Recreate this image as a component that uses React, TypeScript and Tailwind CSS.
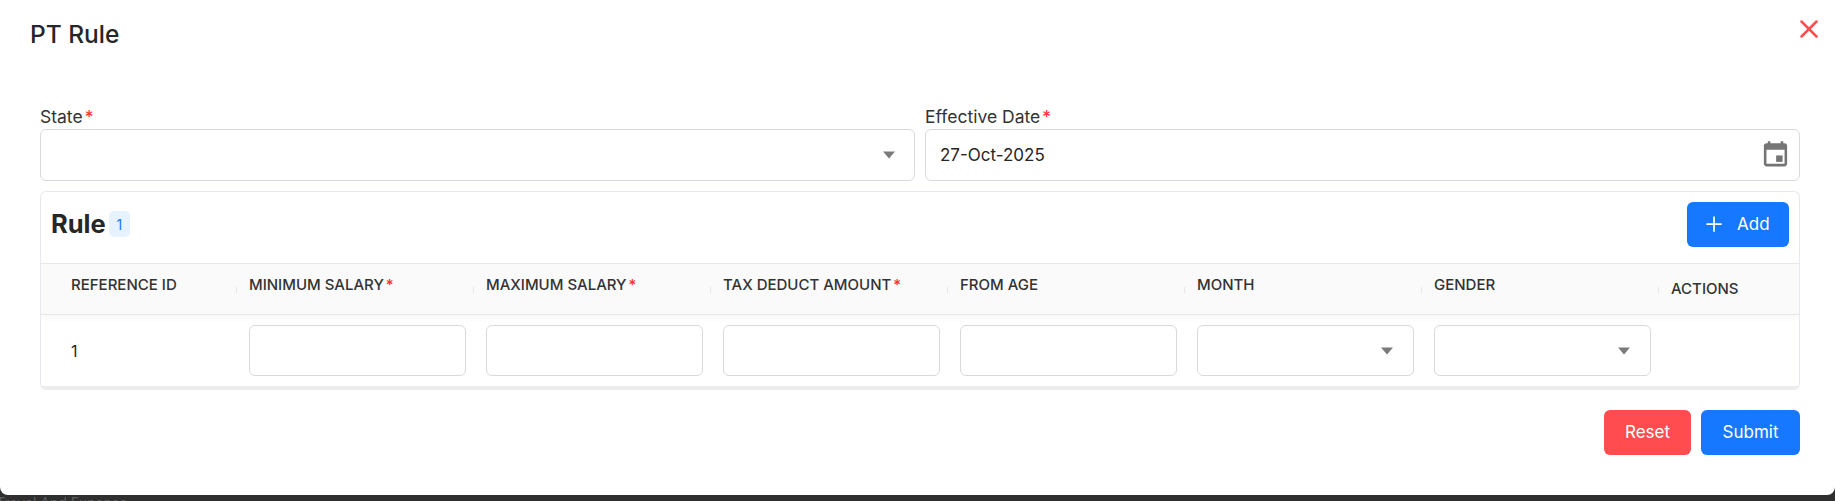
import React from 'react';
import { Plus, X } from 'lucide-react';

const columns = [
  { label: 'REFERENCE ID' },
  { label: 'MINIMUM SALARY', required: true },
  { label: 'MAXIMUM SALARY', required: true },
  { label: 'TAX DEDUCT AMOUNT', required: true },
  { label: 'FROM AGE' },
  { label: 'MONTH' },
  { label: 'GENDER' },
];

const Caret: React.FC = () => (
  <svg width="14" height="8" viewBox="0 0 14 8" className="shrink-0">
    <path d="M1 .5h12L7 7.5z" fill="#7a7a7a" />
  </svg>
);

const CalendarIcon: React.FC = () => (
  <svg width="31" height="31" viewBox="0 0 24 24" fill="#757575" className="-mt-[3px]">
    <path d="M19 4h-1V2.500h-2V4H8V2.500H6V4H5c-1.100 0-2 .9-2 2v14c0 1.100.9 2 2 2h14c1.100 0 2-.9 2-2V6c0-1.100-.9-2-2-2zm0 16H5V9h14v11z" />
    <path d="M12.500 13.500h5v5h-5z" />
  </svg>
);

const Required: React.FC = () => <span className="ml-[2px] text-[#ff2d2d]">*</span>;

const Field: React.FC<{ label: string; children: React.ReactNode }> = ({ label, children }) => (
  <div className="flex-1">
    <label className="flex h-[19px] translate-y-[1px] items-center text-[17.500px] leading-[19px] text-[#333]">
      {label}
      <Required />
    </label>
    <div className="mt-[4px] flex h-[52px] items-center justify-between rounded-[6px] border border-[#d9d9d9] bg-white pl-[14px] pr-[8px]">
      {children}
    </div>
  </div>
);

const App: React.FC = () => {
  return (
    <div className="h-[501px] w-[1835px] overflow-hidden bg-[#2f2f2f] font-['Inter',sans-serif] text-[#262626]">
      <div className="relative h-[495px] rounded-b-[8px] bg-white pl-[40px] pr-[35px]">
        <h2 className="-ml-[10px] pt-[19px] text-[24.500px] font-medium leading-[30px]">PT Rule</h2>
        <button className="absolute right-[11px] top-[14px] text-[#ff4d4f]">
          <X size={30} strokeWidth={2} />
        </button>

        <div className="mt-[57px] flex gap-[10px]">
          <Field label="State">
            <span />
            <span className="mr-[10px]">
              <Caret />
            </span>
          </Field>
          <Field label="Effective Date">
            <span className="pt-[1px] text-[17px]">27-Oct-2025</span>
            <CalendarIcon />
          </Field>
        </div>

        <div className="mt-[10px] h-[199px] overflow-hidden rounded-[6px] border border-[#e6e9ee] border-b-[4px] border-b-[#ececec] bg-white">
          <div className="flex h-[71px] items-center justify-between px-[10px] pb-[7px]">
            <div className="flex items-center gap-[3px]">
              <span className="text-[25.500px] font-bold leading-[30px]">Rule</span>
              <span className="flex h-[26px] w-[21px] items-center justify-center rounded-[5px] bg-[#e6f2ff] text-[14px] text-[#1677ff]">
                1
              </span>
            </div>
            <button className="flex h-[45px] w-[102px] items-center gap-[11px] rounded-[6px] bg-[#1677ff] pl-[15px] text-[17px] text-white">
              <Plus size={24} strokeWidth={1.75} />
              <span className="pt-[1px]">Add</span>
            </button>
          </div>

          <table className="w-full table-fixed border-collapse">
            <colgroup>
              <col className="w-[196px]" />
              <col className="w-[237px]" />
              <col className="w-[237px]" />
              <col className="w-[237px]" />
              <col className="w-[237px]" />
              <col className="w-[237px]" />
              <col className="w-[237px]" />
              <col />
            </colgroup>
            <thead>
              <tr className="h-[51px] border-y border-[#e8e8e8] bg-[#fafafa] shadow-[0_3px_6px_rgba(0,0,0,0.04)]">
                {columns.map((col, i) => (
                  <th
                    key={col.label}
                    className={`relative pb-[7px] text-left text-[15px] font-medium text-[#333] ${
                      i === 0 ? 'pl-[30px]' : 'pl-[12px]'
                    }`}
                  >
                    {col.label}
                    {col.required && <Required />}
                    <span className="absolute right-0 top-[23px] h-[6px] w-px bg-[#e8e8e8]" />
                  </th>
                ))}
                <th className="pl-[12px] text-left text-[15px] font-medium text-[#333]">ACTIONS</th>
              </tr>
            </thead>
            <tbody>
              <tr className="h-[72px]">
                <td className="pl-[30px] text-[16px]">1</td>
                {[0, 1, 2, 3].map((n) => (
                  <td key={n} className="pl-[12px] pr-[8px]">
                    <div className="h-[51px] rounded-[6px] border border-[#d9d9d9] bg-white" />
                  </td>
                ))}
                {[0, 1].map((n) => (
                  <td key={n} className="pl-[12px] pr-[8px]">
                    <div className="flex h-[51px] items-center justify-end rounded-[6px] border border-[#d9d9d9] bg-white pr-[19px]">
                      <Caret />
                    </div>
                  </td>
                ))}
                <td />
              </tr>
            </tbody>
          </table>
        </div>

        <div className="mt-[20px] flex justify-end gap-[10px]">
          <button className="h-[45px] w-[87px] rounded-[6px] bg-[#ff4d4f] text-[17px] text-white">Reset</button>
          <button className="h-[45px] w-[99px] rounded-[6px] bg-[#1677ff] text-[17px] text-white">Submit</button>
        </div>
      </div>
      <div className="-ml-[4px] pt-[1px] text-[14px] leading-[14px] text-[#5c5c5c]">Travel And Expense</div>
    </div>
  );
};

export default App;
